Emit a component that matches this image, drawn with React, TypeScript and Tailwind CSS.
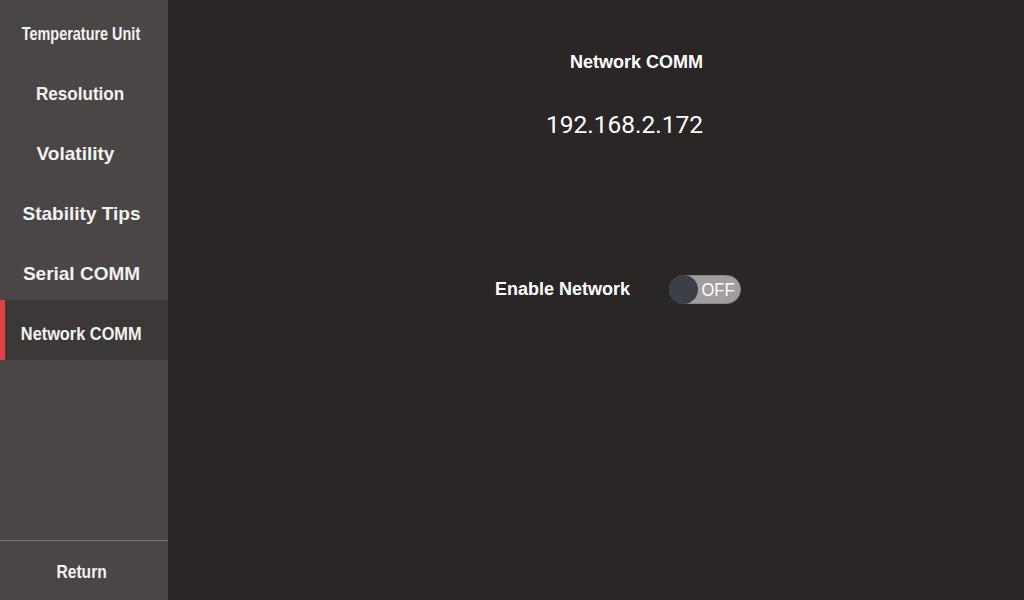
const menu = [
  { label: "Temperature Unit", scale: "scale-x-[0.76]", pad: "pr-[6px]" },
  { label: "Resolution", scale: "scale-x-[0.9]", pad: "pr-[8px]" },
  { label: "Volatility", scale: "", pad: "pr-[17px]" },
  { label: "Stability Tips", scale: "", pad: "pr-[5px]" },
  { label: "Serial COMM", scale: "", pad: "pr-[5px]" },
  { label: "Network COMM", scale: "scale-x-[0.86]", pad: "pr-[6px]" },
];

const App = () => {
  const active = "Network COMM";

  return (
    <div className="flex h-[600px] w-[1024px] overflow-hidden bg-[#2a2626] font-['Liberation_Sans',Arial,sans-serif] text-white">
      <aside className="flex w-[168px] flex-col bg-[#4a4646]">
        {menu.map((item) => {
          const selected = item.label === active;
          return (
            <div
              key={item.label}
              className={`relative flex h-[60px] items-center justify-center pt-[8px] ${item.pad} ${selected ? "bg-[#3c3838]" : ""}`}
            >
              {selected && <div className="absolute left-0 top-0 h-full w-[5px] bg-[#d9454a]" />}
              <span className={`inline-block whitespace-nowrap text-[19px] font-bold text-[#f2f2f2] ${item.scale}`}>
                {item.label}
              </span>
            </div>
          );
        })}
        <div className="flex-1" />
        <div className="h-px bg-[#7b7777]" />
        <div className="flex h-[59px] items-center justify-center pt-[4px] pr-[5px]">
          <span className="inline-block scale-x-[0.82] text-[19px] font-bold text-[#f2f2f2]">Return</span>
        </div>
      </aside>

      <main className="flex flex-1 flex-col">
        <div className="ml-[402px] mt-[51px] text-[18px] font-bold leading-[22px]">Network COMM</div>
        <div className="ml-[378px] mt-[38px] font-['Roboto',sans-serif] text-[24.5px] leading-[28px]">192.168.2.172</div>

        <div className="ml-[327px] mt-[135px] flex items-center">
          <span className="text-[18px] font-bold leading-[22px]">Enable Network</span>
          <button className="relative ml-[39px] mt-[1px] flex h-[29px] w-[72px] items-center rounded-full border border-[#8a8686] bg-[#a29e9e]">
            <span className="absolute left-[-1px] top-[-1px] h-[29px] w-[29px] rounded-full bg-[#3b3f47]" />
            <span className="ml-[30px] inline-block scale-x-[0.92] text-[18px] leading-none text-white">OFF</span>
          </button>
        </div>
      </main>
    </div>
  );
};

export default App;
